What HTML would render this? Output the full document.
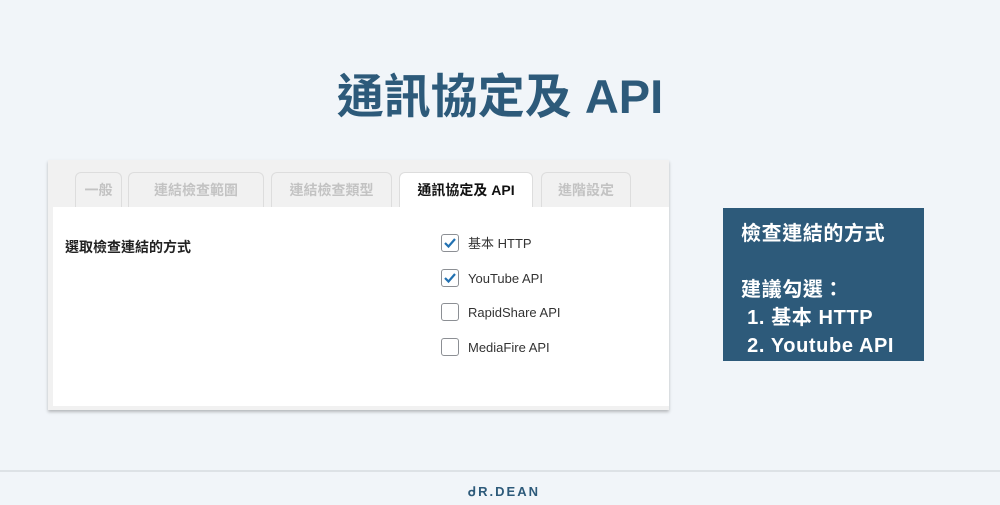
<!DOCTYPE html><html><head><meta charset="utf-8"><style>
body{margin:0;width:1000px;height:505px;background:#f1f5f9;position:relative;font-family:"Liberation Sans","Noto Sans CJK TC",sans-serif;overflow:hidden}
.t{position:absolute;top:58px;left:0;width:1000px;text-align:center;font-size:47px;font-weight:bold;color:#2d5a7a}
.panel{position:absolute;left:48px;top:160px;width:621px;height:250px;background:#f1f1f1;box-shadow:0 2px 3px rgba(0,0,0,.25)}
.tab{position:absolute;top:12px;height:35px;border:1px solid #ddd;border-bottom:none;border-radius:6px 6px 0 0;background:#f1f1f1;color:#c3c3c3;font-size:14px;font-weight:bold;text-align:center;line-height:35px;box-sizing:border-box}
.tab.a{background:#fff;color:#111;height:36px}
.body{position:absolute;left:5px;top:47px;right:0;bottom:4px;background:#fff}
.lbl{position:absolute;left:12px;top:30px;font-size:14px;font-weight:bold;color:#222}
.cb{position:absolute;left:388px;font-size:13px;color:#333;line-height:18px}
.cb i{display:inline-block;width:16px;height:16px;border:1px solid #8c8f94;border-radius:3px;vertical-align:middle;margin-right:9px;position:relative;top:-2px}
.box{position:absolute;left:723px;top:208px;width:201px;height:153px;background:#2d5a7a;color:#fff;font-weight:bold;font-size:20px;line-height:28px;padding:12px 0 0 18px;box-sizing:border-box;letter-spacing:0.6px}
.line{position:absolute;top:470px;left:0;width:1000px;height:2px;background:#dde2e6}
.logo{position:absolute;top:484px;left:468px;font-size:13px;font-weight:bold;color:#2d5a7a;letter-spacing:2px}
</style></head><body>
<div class="t">通訊協定及 API</div>
<div class="panel">
<div class="tab" style="left:27px;width:47px">一般</div>
<div class="tab" style="left:80px;width:136px">連結檢查範圍</div>
<div class="tab" style="left:223px;width:121px">連結檢查類型</div>
<div class="tab a" style="left:351px;width:134px">通訊協定及 API</div>
<div class="tab" style="left:493px;width:90px">進階設定</div>
<div class="body">
<div class="lbl">選取檢查連結的方式</div>
<div class="cb" style="top:28px"><i><svg width="16" height="16" viewBox="0 0 16 16" style="position:absolute;left:0;top:0"><path d="M3 8l3.5 3.5L13 4" stroke="#2271b1" stroke-width="2.2" fill="none"/></svg></i>基本 HTTP</div>
<div class="cb" style="top:63px"><i><svg width="16" height="16" viewBox="0 0 16 16" style="position:absolute;left:0;top:0"><path d="M3 8l3.5 3.5L13 4" stroke="#2271b1" stroke-width="2.2" fill="none"/></svg></i>YouTube API</div>
<div class="cb" style="top:97px"><i></i>RapidShare API</div>
<div class="cb" style="top:132px"><i></i>MediaFire API</div>
</div></div>
<div class="box">檢查連結的方式<br><br>建議勾選：<br>&nbsp;1. 基本 HTTP<br>&nbsp;2. Youtube API</div>
<div class="line"></div>
<div class="logo">ᑯR.DEAN</div>
</body></html>
